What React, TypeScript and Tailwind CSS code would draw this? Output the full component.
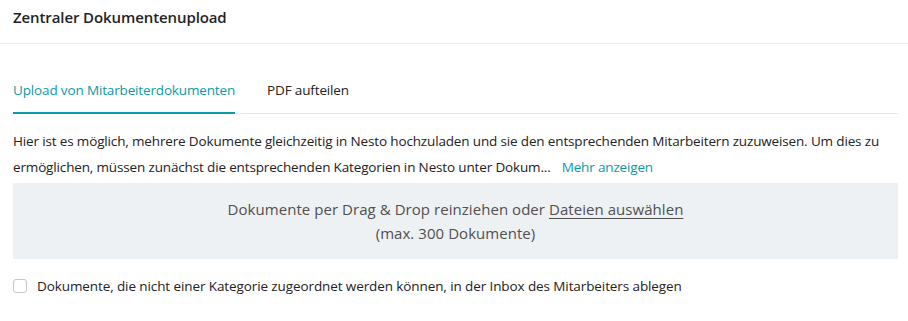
import React, { useState } from 'react';

const font = { fontFamily: '"Open Sans", "Noto Sans", sans-serif' };

const App: React.FC = () => {
  const [tab, setTab] = useState<'upload' | 'split'>('upload');
  const [inbox, setInbox] = useState(false);

  return (
    <div className="w-[908px] h-[321px] bg-white text-[#212529]" style={font}>
      <div className="h-[44px] border-b border-[#ebebeb] px-[13px] flex items-center">
        <h1 className="text-[15px] font-semibold tracking-[-0.1px] text-[#1f2328] -mt-[9px]">Zentraler Dokumentenupload</h1>
      </div>

      <div className="pl-[13px] pr-[10px]">
        <div className="mt-[31px] flex border-b border-[#e8e8e8] text-[13.5px] tracking-[-0.15px]">
          <button
            onClick={() => setTab('upload')}
            className={`h-[39px] pb-[7px] border-b-2 -mb-px ${
              tab === 'upload' ? 'border-[#0b9aa8] text-[#0b9aa8]' : 'border-transparent text-[#222]'
            }`}
          >
            Upload von Mitarbeiterdokumenten
          </button>
          <button
            onClick={() => setTab('split')}
            className={`ml-[32px] h-[39px] pb-[7px] border-b-2 -mb-px ${
              tab === 'split' ? 'border-[#0b9aa8] text-[#0b9aa8]' : 'border-transparent text-[#222]'
            }`}
          >
            PDF aufteilen
          </button>
        </div>

        <div className="mt-[14px] text-[13.5px] leading-[26px] tracking-[-0.15px] text-[#222]">
          <p className="whitespace-nowrap">
            Hier ist es möglich, mehrere Dokumente gleichzeitig in Nesto hochzuladen und sie den entsprechenden Mitarbeitern zuzuweisen. Um dies zu
          </p>
          <p className="whitespace-nowrap">
            ermöglichen, müssen zunächst die entsprechenden Kategorien in Nesto unter Dokum...
            <span className="ml-[11px] text-[#0b9aa8] cursor-pointer">Mehr anzeigen</span>
          </p>
        </div>

        <div className="mt-[3px] h-[76px] bg-[#eef1f4] flex flex-col items-center justify-center text-[15px] leading-[24px] tracking-[0.05px] text-[#505050]">
          <p>
            Dokumente per Drag &amp; Drop reinziehen oder{' '}
            <span className="underline underline-offset-[3px] cursor-pointer">Dateien auswählen</span>
          </p>
          <p>(max. 300 Dokumente)</p>
        </div>

        <label className="mt-[17px] flex items-center gap-[10px] cursor-pointer">
          <span
            onClick={() => setInbox(!inbox)}
            className={`w-[14px] h-[14px] rounded-[3px] border ${inbox ? 'bg-[#0b9aa8] border-[#0b9aa8]' : 'border-[#c8c8c8] bg-white'}`}
          />
          <span className="text-[13.5px] tracking-[-0.1px] text-[#222]">
            Dokumente, die nicht einer Kategorie zugeordnet werden können, in der Inbox des Mitarbeiters ablegen
          </span>
        </label>
      </div>
    </div>
  );
};

export default App;
